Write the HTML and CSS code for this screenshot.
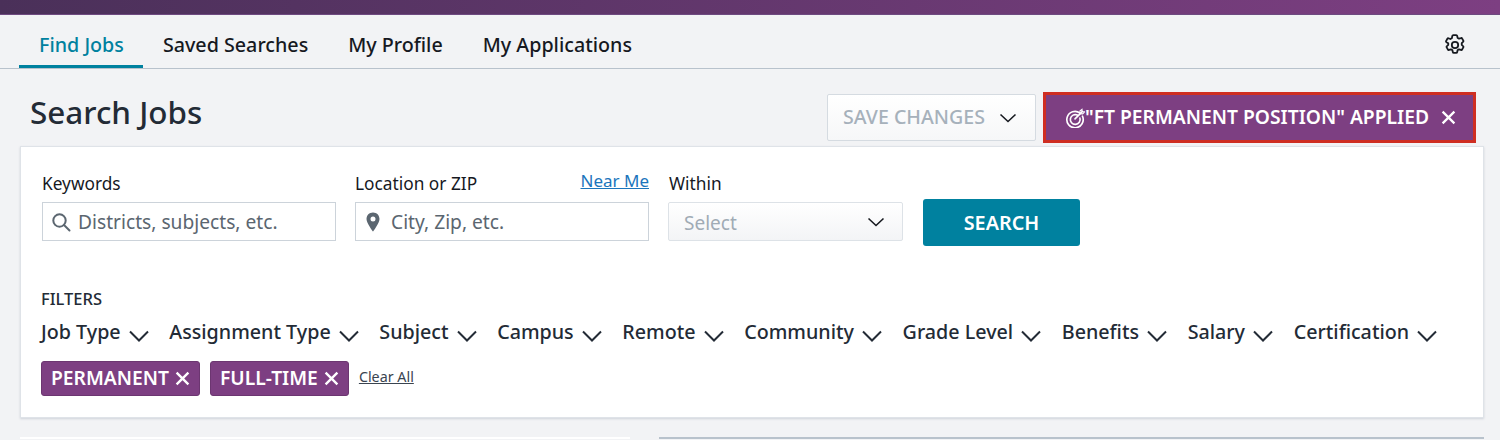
FILE: index.html
```html
<!DOCTYPE html>
<html lang="en">
<head>
<meta charset="utf-8">
<title>Search Jobs</title>
<link rel="stylesheet" href="styles.css">
</head>
<body>
<div class="topbar"></div>
<nav class="nav">
  <a class="tab active">Find Jobs</a>
  <a class="tab">Saved Searches</a>
  <a class="tab">My Profile</a>
  <a class="tab">My Applications</a>
  <svg class="gear" viewBox="0 0 24 24" width="24" height="24" fill="none" stroke="#16191f" stroke-width="1.8" stroke-linejoin="round"><circle cx="12" cy="12" r="3.2"/><path d="M10.800 2.200h2.400c.5 0 .9.300 1 .8l.4 1.900c.5.2 1 .5 1.400.8l1.900-.6c.5-.2 1 0 1.200.4l1.200 2.100c.3.400.2 1-.2 1.300l-1.400 1.300c.1.500.1 1.100 0 1.600l1.400 1.300c.4.300.5.900.2 1.300l-1.200 2.100c-.2.400-.7.600-1.200.4l-1.900-.6c-.4.300-.9.600-1.400.8l-.4 1.900c-.1.500-.5.800-1 .8h-2.400c-.5 0-.9-.3-1-.8l-.4-1.900c-.5-.2-1-.5-1.400-.8l-1.900.6c-.5.200-1 0-1.200-.4l-1.200-2.100c-.3-.4-.2-1 .2-1.300l1.400-1.300c-.1-.5-.1-1.100 0-1.600L3.400 9.200c-.4-.3-.5-.9-.2-1.300l1.200-2.100c.2-.4.7-.6 1.200-.4l1.900.6c.4-.3.900-.6 1.400-.8L9.300 3c.1-.5.500-.8 1-.8z"/></svg>
</nav>
<header class="head">
  <h1 class="title">Search Jobs</h1>
  <div class="head-actions">
    <button class="save">SAVE CHANGES
      <svg viewBox="0 0 18 10" width="18" height="10"><path d="M1.500 1.500L9 8.500l7.500-7" fill="none" stroke="#16191f" stroke-width="1.600"/></svg>
    </button>
    <button class="applied">
      <svg viewBox="0 0 22 22" width="20" height="20" fill="none" stroke="#fff" stroke-width="1.800" stroke-linecap="round"><path d="M16.500 5.600A9 9 0 1 0 19.200 9"/><path d="M13.600 7.800A5.400 5.400 0 1 0 16.400 11"/><path d="M11 12L19 4"/><path d="M16.400 3.400l.1 3 3 .1 2-2.300-2.600-.3-.2-2.500z" stroke-width="1.200"/></svg><span>"FT PERMANENT POSITION" APPLIED</span>
      <svg class="x-big" viewBox="0 0 14 14" width="15" height="15"><path d="M1.500 1.500l11 11M12.500 1.500l-11 11" stroke="#fff" stroke-width="2.100" fill="none"/></svg>
    </button>
  </div>
</header>
<main class="card">
  <form class="search">
    <div class="field f-key">
      <label class="label">Keywords</label>
      <div class="input">
        <svg viewBox="0 0 20 20" width="20" height="20" fill="none" stroke="#5b6670" stroke-width="2"><circle cx="8.500" cy="8.500" r="6.200"/><path d="M13 13l5.500 5.500" stroke-linecap="round"/></svg>
        <span>Districts, subjects, etc.</span>
      </div>
    </div>
    <div class="field f-loc">
      <div class="label-row"><label class="label">Location or ZIP</label><a class="near">Near Me</a></div>
      <div class="input">
        <svg viewBox="0 0 14 20" width="14" height="20"><path fill-rule="evenodd" fill="#5b6670" d="M7 .5C3.200.5.500 3.300.500 7c0 4.300 6.500 12.500 6.500 12.500S13.500 11.300 13.500 7C13.500 3.300 10.800.5 7 .5zM7 4.600a2.500 2.500 0 1 1 0 5 2.500 2.500 0 0 1 0-5z"/></svg>
        <span>City, Zip, etc.</span>
      </div>
    </div>
    <div class="field f-within">
      <label class="label">Within</label>
      <div class="select"><span class="select-text">Select</span>
        <svg viewBox="0 0 18 10" width="18" height="10"><path d="M1.500 1.500L9 8.500l7.500-7" fill="none" stroke="#16191f" stroke-width="1.600"/></svg>
      </div>
    </div>
    <button class="go">SEARCH</button>
  </form>
  <div class="filters-label">FILTERS</div>
  <div class="filters">
    <span class="filter">Job Type <svg viewBox="0 0 20 12" width="20" height="12"><path d="M1 1.500l9 9 9-9" fill="none" stroke="#232b36" stroke-width="2"/></svg></span>
    <span class="filter">Assignment Type <svg viewBox="0 0 20 12" width="20" height="12"><path d="M1 1.500l9 9 9-9" fill="none" stroke="#232b36" stroke-width="2"/></svg></span>
    <span class="filter">Subject <svg viewBox="0 0 20 12" width="20" height="12"><path d="M1 1.500l9 9 9-9" fill="none" stroke="#232b36" stroke-width="2"/></svg></span>
    <span class="filter">Campus <svg viewBox="0 0 20 12" width="20" height="12"><path d="M1 1.500l9 9 9-9" fill="none" stroke="#232b36" stroke-width="2"/></svg></span>
    <span class="filter">Remote <svg viewBox="0 0 20 12" width="20" height="12"><path d="M1 1.500l9 9 9-9" fill="none" stroke="#232b36" stroke-width="2"/></svg></span>
    <span class="filter">Community <svg viewBox="0 0 20 12" width="20" height="12"><path d="M1 1.500l9 9 9-9" fill="none" stroke="#232b36" stroke-width="2"/></svg></span>
    <span class="filter">Grade Level <svg viewBox="0 0 20 12" width="20" height="12"><path d="M1 1.500l9 9 9-9" fill="none" stroke="#232b36" stroke-width="2"/></svg></span>
    <span class="filter">Benefits <svg viewBox="0 0 20 12" width="20" height="12"><path d="M1 1.500l9 9 9-9" fill="none" stroke="#232b36" stroke-width="2"/></svg></span>
    <span class="filter">Salary <svg viewBox="0 0 20 12" width="20" height="12"><path d="M1 1.500l9 9 9-9" fill="none" stroke="#232b36" stroke-width="2"/></svg></span>
    <span class="filter">Certification <svg viewBox="0 0 20 12" width="20" height="12"><path d="M1 1.500l9 9 9-9" fill="none" stroke="#232b36" stroke-width="2"/></svg></span>
  </div>
  <div class="chips">
    <span class="chip">PERMANENT <svg viewBox="0 0 14 14" width="15" height="15"><path d="M1.500 1.500l11 11M12.500 1.500l-11 11" stroke="#fff" stroke-width="2.200" fill="none"/></svg></span>
    <span class="chip">FULL-TIME <svg viewBox="0 0 14 14" width="15" height="15"><path d="M1.500 1.500l11 11M12.500 1.500l-11 11" stroke="#fff" stroke-width="2.200" fill="none"/></svg></span>
    <a class="clear">Clear All</a>
  </div>
</main>
<div class="below"><div class="below-left"></div><div class="below-right"></div></div>
</body>
</html>
```

FILE: styles.css
```css
* { box-sizing: border-box; }
html, body { margin: 0; height: 440px; overflow: hidden; }
body { background: #f2f3f5; font-family: "Noto Sans", "Open Sans", sans-serif; color: #232b36; }
.topbar { height: 15px; background: linear-gradient(90deg, #4a3059, #7d3f82); border-bottom: 1px solid #6e4a80; }
.nav { height: 54px; border-bottom: 1px solid #b8c2cc; display: flex; align-items: stretch; padding: 0 33px 0 19px; }
.tab { font-size: 19.7px; font-weight: 500; color: #16191f; padding: 0 20px; line-height: 60px; height: 53px; }
.tab.active { color: #00819f; border-bottom: 3px solid #00819f; padding-right: 19px; }
.gear { margin: 6px 0 0 auto; align-self: center; }
.head { display: flex; justify-content: space-between; height: 77px; padding: 23px 24px 0 30px; }
.title { margin: 0; font-size: 31.4px; font-weight: 500; line-height: 40px; color: #232b36; }
.head-actions { display: flex; gap: 7px; margin-top: 1px; align-items: flex-start; }
button { font-family: inherit; cursor: pointer; }
.save { width: 209px; height: 47px; background: linear-gradient(#fff, #f6f7f8); border: 1px solid #d5dbe1; border-radius: 2px; color: #a6b1bb; font-size: 19.6px; font-weight: 500; display: flex; align-items: center; justify-content: space-between; padding: 0 18px 2px 15px; margin-top: 1px; }
.save svg { margin-top: 2px; }
.applied { width: 433px; height: 51px; background: #7d3f82; border: 3px solid #cf2e22; color: #fff; font-size: 19.25px; font-weight: 600; display: flex; align-items: center; padding: 0 0 2px 19px; margin-top: -1px; }
.applied svg { margin-top: 2px; }
.x-big { margin-left: 12px; }
.card { margin: 0 16px 0 20px; height: 272px; background: #fff; border: 1px solid #dfe3e8; box-shadow: 0 1px 2px #cfd4da; padding: 0 20px; }
.search { display: flex; align-items: flex-start; padding-top: 26px; margin-left: 1px; }
.field { display: flex; flex-direction: column; }
.f-key { width: 294px; margin-right: 19px; }
.f-loc { width: 294px; margin-right: 19px; }
.f-within { width: 235px; margin-right: 20px; }
.f-within .label { padding-left: 1px; }
.label-row { display: flex; justify-content: space-between; }
.label { font-size: 17.3px; line-height: 22px; color: #16191f; height: 29px; }
.near { font-size: 17px; line-height: 15px; height: 20px; color: #1b75bc; text-decoration: underline; }
.input { height: 39px; border: 1px solid #ccd3da; background: #fff; display: flex; align-items: center; gap: 7px; padding-left: 8px; font-size: 19.2px; color: #5b6670; }
.f-loc .input { gap: 11px; padding-left: 10px; }
.select { height: 39px; border: 1px solid #dde2e7; border-radius: 2px; background: linear-gradient(#fff, #f3f4f6); display: flex; align-items: center; justify-content: space-between; padding: 0 17px 0 15px; font-size: 19px; color: #a0abb5; }
.select-text { padding-top: 2px; }
.go { width: 157px; height: 47px; margin-top: 26px; background: #00819f; color: #fff; border: none; border-radius: 3px; font-size: 19.8px; font-weight: 600; }
.filters-label { margin-top: 43px; font-size: 16.5px; line-height: 20px; font-weight: 500; color: #232b36; }
.filters { display: flex; gap: 20.5px; margin-top: 10px; font-size: 19.7px; font-weight: 500; line-height: 26px; white-space: nowrap; }
.filter svg { vertical-align: -3px; margin-left: 3px; }
.chips { display: flex; align-items: center; gap: 10px; margin-top: 16px; }
.chip { height: 35px; background: #7d3f82; border: 1px solid #6c3671; border-radius: 3px; color: #fff; font-size: 19.25px; font-weight: 600; display: flex; align-items: center; gap: 6px; padding: 0 9px 2px; }
.chip svg { margin-top: 2px; }
.clear { font-size: 14.3px; color: #3a4450; text-decoration: underline; margin-bottom: 4px; }
.below { display: flex; margin: 19px 16px 0 20px; gap: 29px; }
.below-left { width: 610px; height: 2px; background: #fff; }
.below-right { flex: 1; height: 2px; background: #b8c2cc; }
```
